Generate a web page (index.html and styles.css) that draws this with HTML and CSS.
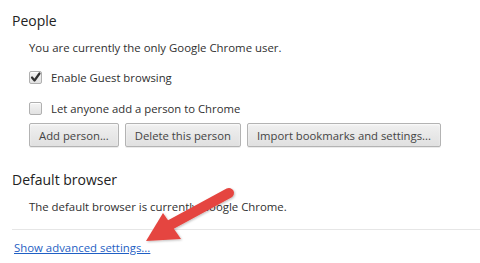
FILE: index.html
```html
<!DOCTYPE html>
<html>
<head>
<meta charset="utf-8">
<link rel="stylesheet" href="styles.css">
</head>
<body>
<div class="page">
  <section class="section">
    <h3 class="title">People</h3>
    <div class="body">
      <p class="text">You are currently the only Google Chrome user.</p>
      <div class="check-row first">
        <span class="box checked"><svg viewBox="0 0 13 13" width="13" height="13"><path d="M3 6.5 L5.5 9.5 L10.5 2.5" fill="none" stroke="#333" stroke-width="2.2" stroke-linecap="round" stroke-linejoin="round"/></svg></span>
        <span class="label">Enable Guest browsing</span>
      </div>
      <div class="check-row">
        <span class="box"></span>
        <span class="label">Let anyone add a person to Chrome</span>
      </div>
      <div class="buttons">
        <button class="btn">Add person...</button>
        <button class="btn">Delete this person</button>
        <button class="btn">Import bookmarks and settings...</button>
      </div>
    </div>
  </section>
  <section class="section second">
    <h3 class="title">Default browser</h3>
    <div class="body">
      <p class="text tight">The default browser is currently Google Chrome.</p>
    </div>
  </section>
  <div class="footer">
    <a class="link" href="#">Show advanced settings...</a>
  </div>
</div>
<svg class="arrow" width="480" height="263" viewBox="0 0 480 263">
  <defs>
    <filter id="sh" x="-20%" y="-20%" width="140%" height="140%">
      <feDropShadow dx="1" dy="1" stdDeviation="1" flood-color="#000" flood-opacity="0.25"/>
    </filter>
  </defs>
  <g filter="url(#sh)" fill="#e5453f">
    <line x1="229" y1="193" x2="170" y2="225" stroke="#e5453f" stroke-width="10" stroke-linecap="round"/>
    <polygon points="146,241 163,213 181,239"/>
  </g>
</svg>
</body>
</html>
```
FILE: styles.css
```css
html, body {
  margin: 0;
  padding: 0;
  background: #fff;
}
body {
  width: 480px;
  height: 263px;
  overflow: hidden;
  position: relative;
  font-family: "Open Sans", "Noto Sans", sans-serif;
  color: #303030;
}
.page {
  padding: 11px 0 0 12px;
}
.title {
  margin: 0;
  font-weight: normal;
  font-size: 14px;
  line-height: 20px;
  color: #222;
}
.body {
  padding-left: 17px;
}
.text {
  margin: 9px 0 0;
  font-size: 11.4px;
  line-height: 16px;
}
.text.tight {
  margin-top: 9px;
}
.check-row {
  display: flex;
  align-items: center;
  gap: 9px;
  height: 16px;
  margin-top: 15px;
  font-size: 11.3px;
}
.check-row.first {
  margin-top: 13px;
}
.box {
  width: 11px;
  height: 11px;
  border: 1px solid #b0b0b0;
  border-radius: 2px;
  background: linear-gradient(#f4f4f4, #e2e2e2);
  display: flex;
  align-items: center;
  justify-content: center;
  box-shadow: inset 0 1px 0 #fff;
}
.box svg {
  display: block;
  margin: -1px;
}
.buttons {
  display: flex;
  gap: 6px;
  margin-top: 7px;
}
.btn {
  font-family: "Open Sans", "Noto Sans", sans-serif;
  font-size: 11.3px;
  color: #444;
  height: 24px;
  margin: 0;
  padding: 0 9px;
  border: 1px solid #b3b3b3;
  border-radius: 2px;
  background: linear-gradient(#f0f0f0, #e0e0e0);
  box-shadow: 0 1px 0 rgba(0,0,0,0.08), inset 0 1px 2px rgba(255,255,255,0.75);
}
.second {
  margin-top: 23px;
}
.footer {
  margin-top: 14px;
  border-top: 1px solid #e6e6e6;
  padding: 5px 0 0 2px;
}
.link {
  font-size: 11.4px;
  line-height: 16px;
  color: #1f5fc4;
  text-decoration: underline;
}
.arrow {
  position: absolute;
  left: 0;
  top: 0;
  pointer-events: none;
}
```
